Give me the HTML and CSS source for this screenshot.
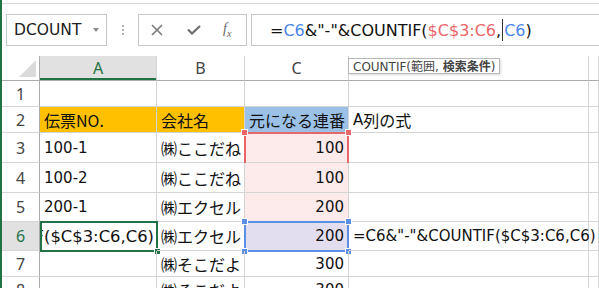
FILE: index.html
```html
<!DOCTYPE html>
<html lang="ja">
  <head>
    <meta charset="utf-8">
    <title>COUNTIF 連番</title>
    <link rel="stylesheet" href="styles.css">
  </head>
  <body>
    <div class="window">
      <div class="topline"></div>

      <!-- name box + formula bar -->
      <div class="formula-row">
        <div class="name-box">DCOUNT<span class="drop"></span></div>
        <div class="grip"><i></i><i></i><i></i></div>
        <div class="fx-box">
          <svg class="btn-cancel" width="12" height="12" viewBox="0 0 12 12">
            <path d="M1 1 L11 11 M11 1 L1 11" stroke="#7a7a7a" stroke-width="1.6" fill="none"/>
          </svg>
          <svg class="btn-enter" width="14" height="10" viewBox="0 0 14 10">
            <path d="M1 4.5 L5 8.5 L13 1" stroke="#6e6e6e" stroke-width="2.2" fill="none"/>
          </svg>
          <span class="fx">f<sub>x</sub></span>
        </div>
        <div class="formula">=<span class="c-blue">C6</span>&amp;"-"&amp;COUNTIF(<span class="c-red">$C$3:C6</span>,<span class="caret"></span><span class="c-blue">C6</span>)</div>
      </div>

      <!-- sheet -->
      <div class="sheet">
        <div class="hd corner"><span class="tri"></span></div>
        <div class="hd col sel">A</div>
        <div class="hd col">B</div>
        <div class="hd col">C</div>
        <div class="hd col"></div>
        <div class="hd col"></div>

        <div class="rh">1</div>
        <div class="cell"></div>
        <div class="cell"></div>
        <div class="cell"></div>
        <div class="cell"></div>
        <div class="cell"></div>

        <div class="rh">2</div>
        <div class="cell yellow"><span class="jp">伝票NO.</span></div>
        <div class="cell yellow"><span class="jp">会社名</span></div>
        <div class="cell blue"><span class="jp">元になる連番</span></div>
        <div class="cell">A<span class="jp">列の式</span></div>
        <div class="cell"></div>

        <div class="rh">3</div>
        <div class="cell">100-1</div>
        <div class="cell"><span class="jp">㈱ここだね</span></div>
        <div class="cell num pink">100<div class="range-red"><i class="h tl"></i><i class="h tr"></i></div></div>
        <div class="cell"></div>
        <div class="cell"></div>

        <div class="rh">4</div>
        <div class="cell">100-2</div>
        <div class="cell"><span class="jp">㈱ここだね</span></div>
        <div class="cell num pink">100</div>
        <div class="cell"></div>
        <div class="cell"></div>

        <div class="rh">5</div>
        <div class="cell">200-1</div>
        <div class="cell"><span class="jp">㈱エクセル</span></div>
        <div class="cell num pink">200</div>
        <div class="cell"></div>
        <div class="cell"></div>

        <div class="rh sel">6</div>
        <div class="cell editing"><span class="clip"><span>=C6&amp;"-"&amp;COUNTIF($C$3:C6,C6)</span></span><div class="active"><i class="fill"></i></div></div>
        <div class="cell"><span class="jp">㈱エクセル</span></div>
        <div class="cell num lilac">200<div class="range-blue"><i class="h tl"></i><i class="h tr"></i><i class="h bl"></i><i class="h br"></i></div></div>
        <div class="cell">=C6&amp;"-"&amp;COUNTIF($C$3:C6,C6)</div>
        <div class="cell"></div>

        <div class="rh">7</div>
        <div class="cell"></div>
        <div class="cell"><span class="jp">㈱そこだよ</span></div>
        <div class="cell num">300</div>
        <div class="cell"></div>
        <div class="cell"></div>

        <div class="rh">8</div>
        <div class="cell"></div>
        <div class="cell"><span class="jp">㈱そこだよ</span></div>
        <div class="cell num">300</div>
        <div class="cell"></div>
        <div class="cell"></div>

        <div class="tip">COUNTIF(<span class="jp">範囲</span>, <b class="jp">検索条件</b>)</div>
      </div>
    </div>
  </body>
</html>
```

FILE: styles.css
```css
body {
  margin: 0;
  background: #fff;
  font-family: "DejaVu Sans", "Noto Sans CJK JP", sans-serif;
  color: #111;
}

.jp {
  font-family: "Noto Sans CJK JP", sans-serif;
  font-size: 16px;
}

.window {
  width: 597px;
  height: 288px;
  border-left: 2px solid #217346;
  overflow: hidden;
}

.topline {
  height: 3px;
  border-bottom: 1px solid #d6d6d6;
}

/* formula bar */
.formula-row {
  display: flex;
  height: 32px;
  margin: 10px 0 10px 4px;
}

.name-box {
  box-sizing: border-box;
  width: 101px;
  border: 1px solid #c6c6c6;
  display: flex;
  align-items: center;
  padding-left: 7px;
  font-size: 15.5px;
  color: #222;
}

.drop {
  margin-left: auto;
  margin-right: 7px;
  border-left: 3.5px solid transparent;
  border-right: 3.5px solid transparent;
  border-top: 4px solid #8a8a8a;
}

.grip {
  width: 31px;
  display: flex;
  flex-direction: column;
  align-items: center;
  justify-content: center;
  gap: 2px;
}

.grip i {
  width: 2px;
  height: 2px;
  background: #b4b4b4;
}

.fx-box {
  box-sizing: border-box;
  width: 109px;
  border: 1px solid #c6c6c6;
  display: flex;
  align-items: center;
}

.btn-cancel { margin-left: 12px; }
.btn-enter { margin-left: 24px; }

.fx {
  margin-left: 22px;
  font-family: "Liberation Serif", serif;
  font-style: italic;
  font-size: 14px;
  color: #666;
}

.fx sub {
  font-size: 10px;
}

.formula {
  flex: 1;
  margin-left: 4px;
  border: 1px solid #c6c6c6;
  border-right: none;
  display: flex;
  align-items: center;
  padding-left: 18px;
  font-size: 16px;
  white-space: pre;
}

.c-blue { color: #4a86e8; }
.c-red { color: #e8666a; }

.caret {
  display: inline-block;
  width: 1px;
  height: 22px;
  background: #333;
  margin: 0 1px;
}

/* sheet grid */
.sheet {
  position: relative;
  display: grid;
  grid-template-columns: 38px 117px 88px 104px 240px 1fr;
  grid-template-rows: 25px 26px 26px 30px 30px 29px 29px 26px 26px;
}

.hd {
  box-sizing: border-box;
  display: flex;
  align-items: center;
  justify-content: center;
  border-bottom: 1px solid #ababab;
  border-right: 1px solid #d4d4d4;
  font-family: "Noto Sans", sans-serif;
  font-size: 16px;
  color: #444;
}

.hd.sel {
  background: #e1e1e1;
  color: #217346;
  box-shadow: inset 0 -2px 0 #217346;
}

.corner {
  position: relative;
  border-right-color: #ababab;
}

.tri {
  position: absolute;
  right: 3px;
  bottom: 3px;
  border-left: 17px solid transparent;
  border-bottom: 17px solid #dadada;
}

.rh {
  box-sizing: border-box;
  display: flex;
  align-items: center;
  justify-content: center;
  border-right: 1px solid #ababab;
  border-bottom: 1px solid #d4d4d4;
  font-family: "Noto Sans", sans-serif;
  font-size: 16px;
  color: #444;
}

.rh.sel {
  background: #e1e1e1;
  color: #217346;
}

.cell {
  box-sizing: border-box;
  position: relative;
  display: flex;
  align-items: center;
  padding: 0 4px;
  border-right: 1px solid #d4d4d4;
  border-bottom: 1px solid #d4d4d4;
  font-size: 15px;
  white-space: nowrap;
}

.cell.num { justify-content: flex-end; }
.yellow { background: #ffc000; }
.blue { background: #9bc2e6; }
.pink { background: #fdeaea; }
.lilac { background: #e2ddef; }

.editing {
  padding: 0 2px 0 0;
  font-size: 16.4px;
}

.clip {
  flex: 1;
  display: flex;
  justify-content: flex-end;
  overflow: hidden;
}

.clip span { flex-shrink: 0; }

/* reference ranges drawn over column C */
.range-red {
  position: absolute;
  left: -1px;
  top: -1px;
  width: 105px;
  height: 119px;
  box-sizing: border-box;
  border: 2px solid #e8666a;
}

.range-blue {
  position: absolute;
  left: -1px;
  top: -1px;
  width: 105px;
  height: 31px;
  box-sizing: border-box;
  border: 2px solid #5b8fe6;
}

.h {
  position: absolute;
  width: 5px;
  height: 5px;
  border: 1px solid #fff;
}

.range-red .h { background: #e8666a; }
.range-blue .h { background: #5b8fe6; }
.h.tl { left: -5px; top: -5px; }
.h.tr { right: -5px; top: -5px; }
.h.bl { left: -5px; bottom: -5px; }
.h.br { right: -5px; bottom: -5px; }

/* active cell A6 */
.active {
  position: absolute;
  left: 0;
  top: -1px;
  width: 118px;
  height: 31px;
  box-sizing: border-box;
  border: 2px solid #217346;
}

.fill {
  position: absolute;
  right: -5px;
  bottom: -5px;
  width: 5px;
  height: 5px;
  background: #217346;
  border: 1px solid #fff;
}

.tip {
  position: absolute;
  left: 346px;
  top: 2px;
  height: 16px;
  box-sizing: border-box;
  padding: 0 4px;
  border: 1px solid #b8b8b8;
  box-shadow: 1px 1px 2px rgba(0, 0, 0, 0.15);
  background: #fff;
  font-size: 12px;
  line-height: 14px;
  color: #444;
  white-space: nowrap;
}

.tip .jp {
  font-size: 12px;
}
```
